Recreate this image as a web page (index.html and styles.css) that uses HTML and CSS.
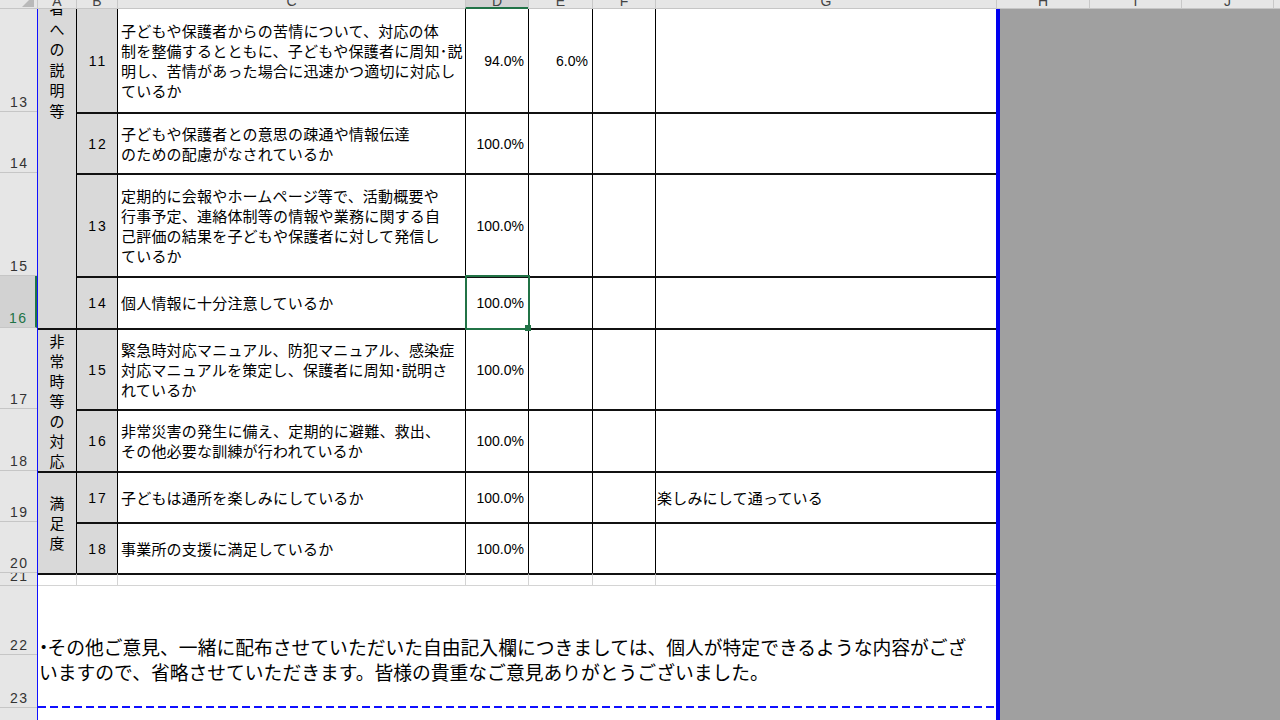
FILE: index.html
```html
<!DOCTYPE html>
<html lang="ja">
<head>
<meta charset="utf-8">
<title>アンケート集計</title>
<link rel="stylesheet" href="styles.css">
</head>
<body>
<div class="app">
  <div class="colheads">
    <div class="ch corner"><span class="tri"></span></div>
    <div class="ch c-a"><span>A</span></div>
    <div class="ch c-b"><span>B</span></div>
    <div class="ch c-c"><span>C</span></div>
    <div class="ch c-d active"><span>D</span></div>
    <div class="ch c-e"><span>E</span></div>
    <div class="ch c-f"><span>F</span></div>
    <div class="ch c-g"><span>G</span></div>
    <div class="ch c-h"><span>H</span></div>
    <div class="ch c-i"><span>I</span></div>
    <div class="ch c-j"><span>J</span></div>
    <div class="ch c-k"></div>
  </div>
  <div class="main">
    <div class="rowheads">
      <div class="rh h13"><span>13</span></div>
      <div class="rh h14"><span>14</span></div>
      <div class="rh h15"><span>15</span></div>
      <div class="rh h16 active"><span>16</span></div>
      <div class="rh h17"><span>17</span></div>
      <div class="rh h18"><span>18</span></div>
      <div class="rh h19"><span>19</span></div>
      <div class="rh h20"><span>20</span></div>
      <div class="rh h21"><span>21</span></div>
      <div class="rh h22"><span>22</span></div>
      <div class="rh h23"><span>23</span></div>
      <div class="rh h24"><span>24</span></div>
    </div>
    <div class="sheet">
      <div class="cat cat1"><div class="vt">者<br>へ<br>の<br>説<br>明<br>等</div></div>
      <div class="cat cat2"><div class="vt">非<br>常<br>時<br>等<br>の<br>対<br>応</div></div>
      <div class="cat cat3"><div class="vt">満<br>足<br>度</div></div>

      <div class="c num top0">11</div>
      <div class="c q top0"><p>子どもや保護者からの苦情について、対応の体<br>制を整備するとともに、子どもや保護者に周知･説<br>明し、苦情があった場合に迅速かつ適切に対応し<br>ているか</p></div>
      <div class="c pct top0">94.0%</div>
      <div class="c pct top0">6.0%</div>
      <div class="c top0"></div>
      <div class="c note top0"></div>

      <div class="c num">12</div>
      <div class="c q"><p>子どもや保護者との意思の疎通や情報伝達<br>のための配慮がなされているか</p></div>
      <div class="c pct">100.0%</div>
      <div class="c pct"></div>
      <div class="c"></div>
      <div class="c note"></div>

      <div class="c num">13</div>
      <div class="c q"><p>定期的に会報やホームページ等で、活動概要や<br>行事予定、連絡体制等の情報や業務に関する自<br>己評価の結果を子どもや保護者に対して発信し<br>ているか</p></div>
      <div class="c pct">100.0%</div>
      <div class="c pct"></div>
      <div class="c"></div>
      <div class="c note"></div>

      <div class="c num">14</div>
      <div class="c q"><p>個人情報に十分注意しているか</p></div>
      <div class="c pct sel">100.0%</div>
      <div class="c pct"></div>
      <div class="c"></div>
      <div class="c note"></div>

      <div class="c num">15</div>
      <div class="c q"><p>緊急時対応マニュアル、防犯マニュアル、感染症<br>対応マニュアルを策定し、保護者に周知･説明さ<br>れているか</p></div>
      <div class="c pct">100.0%</div>
      <div class="c pct"></div>
      <div class="c"></div>
      <div class="c note"></div>

      <div class="c num">16</div>
      <div class="c q"><p>非常災害の発生に備え、定期的に避難、救出、<br>その他必要な訓練が行われているか</p></div>
      <div class="c pct">100.0%</div>
      <div class="c pct"></div>
      <div class="c"></div>
      <div class="c note"></div>

      <div class="c num">17</div>
      <div class="c q"><p>子どもは通所を楽しみにしているか</p></div>
      <div class="c pct">100.0%</div>
      <div class="c pct"></div>
      <div class="c"></div>
      <div class="c note"><p>楽しみにして通っている</p></div>

      <div class="c num">18</div>
      <div class="c q"><p>事業所の支援に満足しているか</p></div>
      <div class="c pct">100.0%</div>
      <div class="c pct"></div>
      <div class="c"></div>
      <div class="c note"></div>

      <div class="g21 first"></div>
      <div class="g21"></div>
      <div class="g21"></div>
      <div class="g21"></div>
      <div class="g21"></div>
      <div class="g21"></div>
      <div class="g21"></div>

      <div class="remark"><p><span class="bullet">・</span>その他ご意見、一緒に配布させていただいた自由記入欄につきましては、個人が特定できるような内容がござ<br>いますので、省略させていただきます。皆様の貴重なご意見ありがとうございました。</p></div>
      <div class="r24"></div>
    </div>
    <div class="outside"></div>
  </div>
</div>
</body>
</html>
```

FILE: styles.css
```css
* {
  box-sizing: border-box;
  margin: 0;
  padding: 0;
}

html, body {
  width: 1280px;
  height: 720px;
  overflow: hidden;
  background: #ffffff;
}

body {
  font-family: "Noto Sans CJK JP", "Liberation Sans", sans-serif;
  color: #000;
}

.app {
  width: 1280px;
  height: 720px;
  overflow: hidden;
  display: flex;
  flex-direction: column;
}

/* ---------- column headers ---------- */
.colheads {
  display: flex;
  height: 9px;
  flex: none;
  background: #e6e6e6;
}

.ch {
  height: 9px;
  flex: none;
  display: flex;
  justify-content: center;
  align-items: flex-end;
  overflow: hidden;
  border-left: 1px solid #c8c8c8;
  border-bottom: 1px solid #c6c6c6;
  font-family: "Liberation Sans", sans-serif;
  font-size: 14px;
  line-height: 14px;
  color: #444;
}

.ch span {
  flex: none;
}

.ch.active {
  background: #d2d2d2;
  border-bottom: 2px solid #217346;
}

.ch.active span {
  margin-bottom: -1px;
}

.corner {
  width: 37px;
  border-left: 0;
  justify-content: flex-end;
  padding: 0 3px 1px 0;
}

.tri {
  width: 0;
  height: 0;
  border-left: 12px solid transparent;
  border-bottom: 12px solid #b9b9b9;
}

.c-a { width: 39px; }
.c-b { width: 41px; }
.c-c { width: 348px; }
.c-d { width: 63px; }
.c-e { width: 64px; }
.c-f { width: 63px; }
.c-g { width: 341px; }
.c-h { width: 93px; }
.c-i { width: 92px; }
.c-j { width: 92px; }
.c-k { flex: 1; }

/* ---------- main area ---------- */
.main {
  flex: 1;
  display: flex;
  min-height: 0;
}

.rowheads {
  width: 37px;
  flex: none;
  display: flex;
  flex-direction: column;
  background: #e6e6e6;
}

.rh {
  flex: none;
  display: flex;
  justify-content: center;
  align-items: flex-end;
  overflow: hidden;
  border-bottom: 1px solid #c6c6c6;
  padding-bottom: 1px;
  font-family: "Liberation Sans", sans-serif;
  font-size: 14px;
  line-height: 15px;
  letter-spacing: 1.5px;
  color: #333;
}

.rh span {
  flex: none;
  padding-left: 1.5px;
}

.rh.active {
  background: #d2d2d2;
  color: #217346;
  border-right: 2px solid #217346;
}

.h13 { height: 103px; }
.h14 { height: 61px; }
.h15 { height: 103px; }
.h16 { height: 52px; }
.h17 { height: 81px; }
.h18 { height: 62px; }
.h19 { height: 51px; }
.h20 { height: 51px; }
.h21 { height: 13px; }
.h22 { height: 69px; }
.h23 { height: 53px; }
.h24 { height: 40px; }

/* ---------- sheet grid ---------- */
.sheet {
  width: 959px;
  flex: none;
  border-left: 1px solid #1010ff;
  display: grid;
  grid-template-columns: 38px 41px 348px 63px 64px 63px 341px;
  grid-template-rows: 103px 61px 103px 52px 81px 62px 51px 51px 13px 69px 53px 40px;
  background: #fff;
}

.cat {
  background: #d9d9d9;
  display: flex;
  flex-direction: column;
  align-items: center;
  justify-content: center;
  overflow: hidden;
  font-size: 15px;
  line-height: 20px;
  text-align: center;
}

.cat1 {
  grid-area: 1 / 1 / 5 / 2;
  justify-content: flex-start;
  line-height: 20.5px;
}

.cat1 .vt {
  margin-top: -11px;
}

.cat2 {
  grid-area: 5 / 1 / 7 / 2;
  border-top: 2px solid #111;
}

.cat3 {
  grid-area: 7 / 1 / 9 / 2;
  border-top: 2px solid #111;
}

.c {
  border-left: 1px solid #000;
  border-top: 2px solid #111;
  min-width: 0;
  overflow: hidden;
  display: flex;
  align-items: center;
}

.c.top0 {
  border-top: 0;
}

.num {
  background: #d9d9d9;
  justify-content: center;
  font-family: "Liberation Sans", sans-serif;
  font-size: 14px;
  letter-spacing: 2px;
  padding-left: 2px;
}

.q {
  padding-left: 3px;
  font-size: 15px;
  line-height: 20px;
  letter-spacing: 0.2px;
  white-space: nowrap;
}

.note {
  padding-left: 1px;
  font-size: 15px;
  line-height: 20px;
  letter-spacing: 0.2px;
  white-space: nowrap;
}

.pct {
  justify-content: flex-end;
  padding-right: 4px;
  font-family: "Liberation Sans", sans-serif;
  font-size: 14px;
}

.sel {
  position: relative;
  overflow: visible;
}

.sel::after {
  content: "";
  position: absolute;
  left: -1px;
  top: -3px;
  right: -2px;
  bottom: -2px;
  border: 2px solid #217346;
  z-index: 2;
}

.sel::before {
  content: "";
  position: absolute;
  right: -3px;
  bottom: -3px;
  width: 6px;
  height: 6px;
  background: #217346;
  z-index: 3;
}

.g21 {
  border-top: 2px solid #111;
  border-left: 1px solid #d4d4d4;
  border-bottom: 1px solid #d4d4d4;
}

.g21.first {
  border-left: 0;
}

.remark {
  grid-column: 1 / -1;
  grid-row: span 2;
  padding: 48px 0 0 1px;
  font-size: 18.8px;
  line-height: 25px;
  white-space: nowrap;
  overflow: hidden;
  background: repeating-linear-gradient(90deg, #1010ff 0 8px, transparent 8px 12px) left bottom / 100% 2px no-repeat;
}

.bullet {
  font-feature-settings: "palt" 1;
  margin-right: -1px;
}

.r24 {
  grid-column: 1 / -1;
}

.outside {
  flex: 1;
  background: #a0a0a0;
  border-left: 4px solid #0000f0;
}
```
